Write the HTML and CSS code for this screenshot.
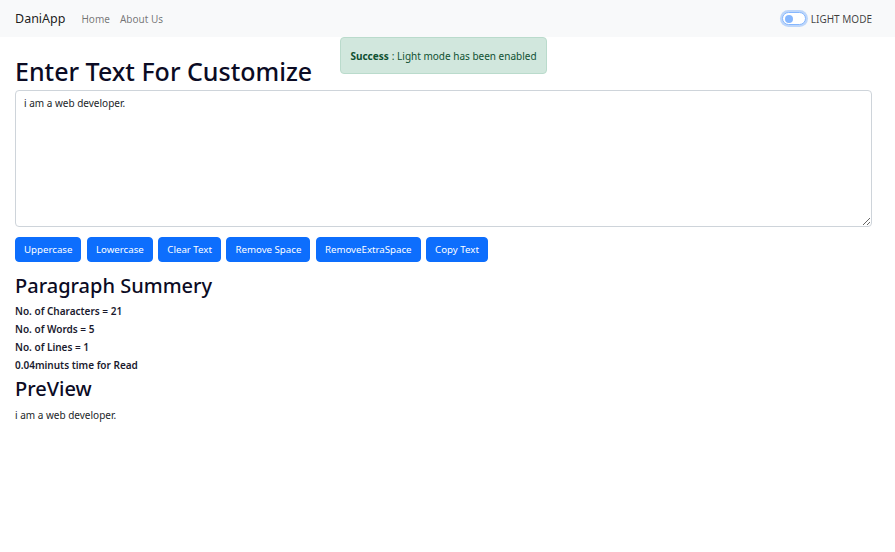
FILE: index.html
```html
<!DOCTYPE html>
<html lang="en">
<head>
<meta charset="utf-8">
<title>DaniApp</title>
<link rel="stylesheet" href="styles.css">
</head>
<body>
<nav class="navbar">
  <div class="nav-left">
    <span class="brand">DaniApp</span>
    <a class="nav-link" href="#">Home</a>
    <a class="nav-link" href="#">About Us</a>
  </div>
  <div class="mode">
    <span class="switch"><span class="knob"></span></span>
    <span class="mode-label">LIGHT MODE</span>
  </div>
</nav>
<div class="alert"><strong>Success</strong> : Light mode has been enabled</div>
<main class="container">
  <h1 class="title">Enter Text For Customize</h1>
  <textarea class="textbox">i am a web developer.</textarea>
  <div class="buttons">
    <button class="btn">Uppercase</button>
    <button class="btn">Lowercase</button>
    <button class="btn">Clear Text</button>
    <button class="btn">Remove Space</button>
    <button class="btn">RemoveExtraSpace</button>
    <button class="btn">Copy Text</button>
  </div>
  <h2 class="subtitle">Paragraph Summery</h2>
  <p class="stat">No. of Characters = 21</p>
  <p class="stat">No. of Words = 5</p>
  <p class="stat">No. of Lines = 1</p>
  <p class="stat">0.04minuts time for Read</p>
  <h2 class="subtitle preview-title">PreView</h2>
  <p class="preview">i am a web developer.</p>
</main>
</body>
</html>
```
FILE: styles.css
```css
* { box-sizing: border-box; }
html, body { margin: 0; padding: 0; }
body {
  font-family: "Noto Sans", "Open Sans", sans-serif;
  font-size: 10px;
  color: #212529;
  background: #fff;
  position: relative;
  width: 895px;
  height: 552px;
  overflow: hidden;
}
.navbar {
  height: 37px;
  background: #f8f9fa;
  display: flex;
  align-items: center;
  justify-content: space-between;
  padding: 0 23px 0 15px;
}
.nav-left { display: flex; align-items: center; }
.brand { font-size: 12.5px; color: rgba(0,0,0,.9); margin-right: 16px; }
.nav-link { font-size: 10px; color: rgba(0,0,0,.55); text-decoration: none; margin-right: 10px; }
.mode { display: flex; align-items: center; gap: 5px; }
.switch {
  width: 24px; height: 13px; border-radius: 7px;
  border: 1px solid #86b7fe;
  box-shadow: 0 0 0 2px rgba(13,110,253,.25);
  background: #fff;
  display: flex; align-items: center; padding-left: 2px;
}
.knob { width: 8px; height: 8px; border-radius: 50%; background: #86b7fe; }
.mode-label { font-size: 10px; color: rgba(0,0,0,.75); }
.alert {
  position: absolute;
  left: 340px; top: 37px;
  width: 207px; height: 37px;
  background: #d1e7dd;
  border: 1px solid #badbcc;
  border-radius: 4px;
  color: #0f5132;
  font-size: 10px;
  display: flex; align-items: center; justify-content: center;
}
.alert strong { font-weight: 700; margin-right: 3px; }
.container { padding: 0 24px 0 15px; }
.title {
  margin: 17px 0 1px;
  font-size: 25px;
  font-weight: 500;
  line-height: 35px;
  color: #0b0b24;
}
.textbox {
  display: block;
  width: 857px;
  height: 137px;
  border: 1px solid #ced4da;
  border-radius: 4px;
  padding: 4px 8px;
  font-family: inherit;
  font-size: 10px;
  color: #212529;
  resize: vertical;
  margin: 0;
  line-height: 16px;
}
.buttons { display: flex; gap: 5.5px; margin-top: 10px; }
.btn {
  height: 25px;
  padding: 0 8px;
  background: #0d6efd;
  border: 1px solid #0d6efd;
  border-radius: 4px;
  color: #fff;
  font-family: inherit;
  font-size: 9.7px;
}
.subtitle {
  margin: 10px 0 2px;
  font-size: 20px;
  font-weight: 500;
  line-height: 28px;
  color: #0b0b24;
}
.stat {
  margin: 0;
  font-size: 10px;
  font-weight: 600;
  line-height: 18px;
  color: #1a1a2e;
}
.preview-title { margin-top: 1px; margin-bottom: 4px; }
.preview { margin: 0; font-size: 10px; line-height: 16px; color: #212529; }
```
